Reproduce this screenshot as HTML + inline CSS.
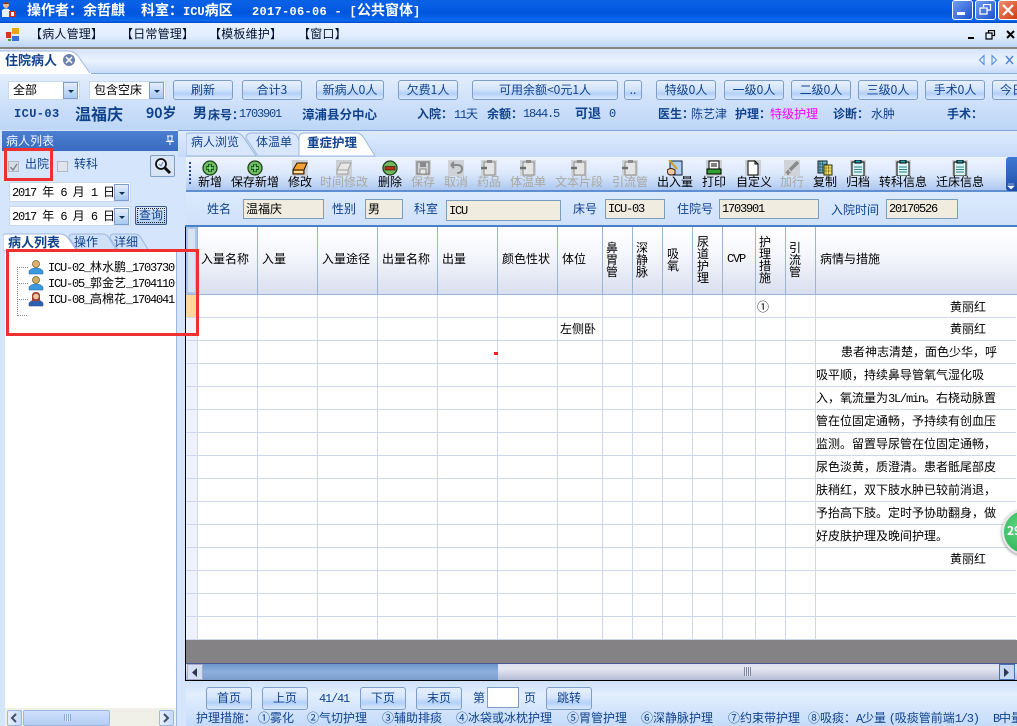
<!DOCTYPE html>
<html><head><meta charset="utf-8">
<style>
html,body{margin:0;padding:0;width:1017px;height:726px;overflow:hidden;background:#d6e6fa}
body{position:relative;font:12px/14px "WenQuanYi Zen Hei","Noto Sans CJK SC",sans-serif;color:#000}
div,span.a,svg{position:absolute}
.t{white-space:nowrap}
.l{font-family:"Liberation Mono",monospace;font-size:12px;letter-spacing:-1.2px}
.b{font-weight:bold}
.n{color:#10428c}
.btn{height:20px;top:80px;box-sizing:border-box;border:1px solid #7f9dc9;border-radius:3px;background:linear-gradient(#e6f0fd 0,#d5e5fb 45%,#b3d0f7 70%,#d9e8fc 100%);color:#10428c;text-align:center;line-height:17px;white-space:nowrap;overflow:hidden}
.inp{background:#f0ece0;border:1px solid #7b9ebd;box-sizing:border-box;white-space:nowrap;padding:2px 2px;line-height:14px}
.lab{color:#10428c;font-size:12px;white-space:nowrap;top:202px}
.tb{top:175px;white-space:nowrap;line-height:14px}
.g{color:#a8a8a0}
.ic{top:160px}
.v{top:227px;width:1px;height:412px;background:#cfd7ec}
.vh{top:227px;width:1px;height:67px;background:#9ab6d6}
.h{left:186px;width:830px;height:1px;background:#cfd7ec}
.th{top:252px;white-space:nowrap}
.tv{top:0;width:12px;line-height:12px;text-align:center}
.c{left:816px;white-space:nowrap;width:200px}
.leg{top:711px;white-space:nowrap;color:#10428c}
.dd{width:15px;height:17px;box-sizing:border-box;border:1px solid #7f9dc9;background:linear-gradient(#e4eefc,#a9c8f2)}
.dd:after{content:"";position:absolute;left:4px;top:7px;border:3px solid transparent;border-top:3px solid #10305c;border-bottom:0}
.in2{background:#fff;border:1px solid #c9d9ef;box-sizing:border-box}
</style></head><body>

<!-- Title bar -->
<div style="left:0;top:0;width:1017px;height:23px;background:linear-gradient(#0a5fe0 0,#0a62e8 10%,#0055dc 55%,#0a68ee 90%,#0048c8 100%)"></div>
<svg style="left:1px;top:1px" width="16" height="18" viewBox="0 0 16 18"><circle cx="5" cy="4" r="3" fill="#e8b890"/><path d="M2 3Q5-1 8 3z" fill="#803018"/><path d="M1 16V9q4-3 8 0v7z" fill="#e8f0f8"/><rect x="8" y="10" width="7" height="6" fill="#c83020"/><rect x="10" y="11" width="3" height="4" fill="#fff"/></svg>
<div class="t b" style="left:27px;top:2px;color:#fff;font-size:14px;line-height:16px">操作者：余哲麒</div>
<div class="t b" style="left:141px;top:2px;color:#fff;font-size:14px;line-height:16px">科室：<span style="font-family:'Liberation Mono',monospace;font-size:12px">ICU</span>病区</div>
<div class="t b" style="left:252px;top:2px;color:#fff;font-size:14px;line-height:16px"><span style="font-family:'Liberation Mono',monospace;font-size:12px;letter-spacing:.3px">2017-06-06 - [</span>公共窗体<span style="font-family:'Liberation Mono',monospace;font-size:12px">]</span></div>
<div style="left:952px;top:0;width:21px;height:20px;box-sizing:border-box;border:1px solid #fff;border-radius:3px;background:linear-gradient(135deg,#6f9cf0,#1c50d0)"></div>
<div style="left:957px;top:12px;width:8px;height:3px;background:#fff"></div>
<div style="left:975px;top:0;width:21px;height:20px;box-sizing:border-box;border:1px solid #fff;border-radius:3px;background:linear-gradient(135deg,#6f9cf0,#1c50d0)"></div>
<svg style="left:979px;top:4px" width="13" height="12"><path d="M4.500 3V.5H11.500V6H8M1 4H8V10H1Z" fill="none" stroke="#fff" stroke-width="1.300"/></svg>
<div style="left:998px;top:0;width:19px;height:20px;box-sizing:border-box;border:1px solid #fff;border-right:0;border-radius:3px 0 0 3px;background:linear-gradient(135deg,#f09070,#d03c10)"></div>
<svg style="left:1002px;top:4px" width="12" height="12"><path d="M1 1L11 11M11 1L1 11" stroke="#fff" stroke-width="2.200"/></svg>

<!-- Menu bar -->
<div style="left:0;top:23px;width:1017px;height:24px;background:linear-gradient(#e9f2fe,#e2edfd 55%,#bcd5f6)"></div>
<div style="left:0;top:47px;width:1017px;height:2px;background:#8a8780"></div>
<svg style="left:6px;top:28px" width="14" height="14"><rect x="0" y="4" width="5" height="6" fill="#e03020"/><rect x="6" y="0" width="7" height="6" fill="#f0a020"/><rect x="6" y="8" width="7" height="5" fill="#3870d8"/><rect x="2" y="11" width="3" height="2" fill="#40a040"/></svg>
<div class="t" style="left:30px;top:27px;font-size:12px;color:#001030;letter-spacing:.2px">【病人管理】</div>
<div class="t" style="left:121px;top:27px;color:#001030;letter-spacing:.2px">【日常管理】</div>
<div class="t" style="left:209px;top:27px;color:#001030;letter-spacing:.2px">【模板维护】</div>
<div class="t" style="left:298px;top:27px;color:#001030;letter-spacing:.2px">【窗口】</div>
<div style="left:968px;top:37px;width:6px;height:2px;background:#000"></div>
<svg style="left:985px;top:30px" width="11" height="10"><path d="M3.500 2.500V.5H9.500V5.500H7M1 3H7V9H1Z" fill="none" stroke="#000" stroke-width="1.200"/></svg>
<svg style="left:1006px;top:30px" width="10" height="10"><path d="M1 1L8 8M8 1L1 8" stroke="#000" stroke-width="2"/></svg>

<!-- Tab row -->
<div style="left:0;top:49px;width:1017px;height:24px;background:linear-gradient(#d7e5fb,#eaf2fe 50%,#c7dbf8)"></div>
<div style="left:0;top:73px;width:1017px;height:1px;background:#8fb0dc"></div>
<svg style="left:0;top:50px" width="92" height="24"><path d="M0 24V2Q0 1 2 1H68Q74 1 78 6L91 23V24Z" fill="#fff"/><path d="M0 1H68Q74 1 78 6L90 23" fill="none" stroke="#9db8de"/></svg>
<div class="t b" style="left:5px;top:53px;color:#10428c;font-size:13px">住院病人</div>
<div style="left:63px;top:54px;width:12px;height:12px;border-radius:6px;background:#6d82a8"></div>
<svg style="left:65px;top:56px" width="8" height="8"><path d="M1 1L7 7M7 1L1 7" stroke="#fff" stroke-width="1.500"/></svg>
<svg style="left:977px;top:54px" width="40" height="12"><path d="M7 1.500L2.500 6L7 10.500Z" fill="none" stroke="#4f88dc"/><path d="M15 1.500L19.500 6L15 10.500Z" fill="none" stroke="#4f88dc"/><path d="M29 2L36 10M36 2L29 10" stroke="#4f88dc" stroke-width="1.500"/></svg>

<!-- Top filter area -->
<div style="left:0;top:74px;width:1017px;height:56px;background:linear-gradient(#e3eefd,#cfe1fa 50%,#bdd6f7)"></div>
<div class="in2 t" style="left:8px;top:81px;width:72px;height:19px;padding:1px 4px">全部</div>
<div class="dd" style="left:63px;top:82px"></div>
<div class="in2 t" style="left:89px;top:81px;width:77px;height:19px;padding:1px 4px">包含空床</div>
<div class="dd" style="left:149px;top:82px"></div>
<div class="btn" style="left:173px;width:60px">刷新</div>
<div class="btn" style="left:242px;width:60px">合计3</div>
<div class="btn" style="left:316px;width:68px">新病人0人</div>
<div class="btn" style="left:398px;width:60px">欠费1人</div>
<div class="btn" style="left:472px;width:146px">可用余额&lt;0元1人</div>
<div class="btn" style="left:624px;width:18px">..</div>
<div class="btn" style="left:656px;width:60px">特级0人</div>
<div class="btn" style="left:724px;width:60px">一级0人</div>
<div class="btn" style="left:791px;width:60px">二级0人</div>
<div class="btn" style="left:858px;width:60px">三级0人</div>
<div class="btn" style="left:925px;width:60px">手术0人</div>
<div class="btn" style="left:992px;width:40px">今日</div>

<div class="t b n" style="left:14px;top:107px;font-family:'Liberation Mono',monospace;font-size:12px;letter-spacing:.4px">ICU-03</div>
<div class="t b n" style="left:75px;top:105px;font-size:16px;line-height:16px">温福庆</div>
<div class="t b n" style="left:146px;top:106px;font-size:14px">90岁</div>
<div class="t b n" style="left:193px;top:106px;font-size:14px">男</div>
<div class="t b n" style="left:208px;top:108px">床号：</div>
<div class="t n l" style="left:239px;top:107px">1703901</div>
<div class="t b n" style="left:302px;top:107px;font-size:12.500px">漳浦县分中心</div>
<div class="t b n" style="left:417px;top:107px">入院：</div>
<div class="t n" style="left:454px;top:107px"><span class="l">11</span>天</div>
<div class="t b n" style="left:487px;top:107px">余额：</div>
<div class="t n l" style="left:523px;top:107px">1844.5</div>
<div class="t b n" style="left:575px;top:106px;font-size:13px">可退</div>
<div class="t n l" style="left:609px;top:107px">0</div>
<div class="t b n" style="left:658px;top:107px">医生：</div>
<div class="t n" style="left:691px;top:107px">陈艺津</div>
<div class="t b n" style="left:735px;top:107px">护理：</div>
<div class="t" style="left:770px;top:107px;color:#ff00ff">特级护理</div>
<div class="t b n" style="left:833px;top:107px">诊断：</div>
<div class="t n" style="left:871px;top:107px">水肿</div>
<div class="t b n" style="left:947px;top:107px">手术：</div>

<!-- Left panel -->
<div style="left:0;top:130px;width:185px;height:596px;background:#d5e5fb"></div>
<div style="left:2px;top:131px;width:176px;height:20px;background:linear-gradient(#4b7fd0,#3a6bc0)"></div>
<div class="t" style="left:6px;top:134px;color:#f0f6ff">病人列表</div>
<svg style="left:165px;top:135px" width="10" height="11"><path d="M2 1H8M3 1V6H7V1M1 6.500H9M5 7V10" stroke="#fff" fill="none"/></svg>
<div style="left:8px;top:161px;width:11px;height:11px;box-sizing:border-box;border:1px solid #b0b8c8;background:#d8dce4"></div>
<svg style="left:9px;top:162px" width="10" height="10"><path d="M1.500 5L4 8L8 2" fill="none" stroke="#7a8090" stroke-width="1.300"/></svg>
<div class="t n" style="left:25px;top:157px">出院</div>
<div style="left:57px;top:161px;width:11px;height:11px;box-sizing:border-box;border:1px solid #b0b8c8;background:#e0e4ec"></div>
<div class="t n" style="left:74px;top:157px">转科</div>
<div style="left:150px;top:155px;width:25px;height:22px;box-sizing:border-box;border:1px solid #7f9dc9;border-radius:2px;background:#d8e4f4"></div>
<svg style="left:153px;top:157px" width="19" height="18"><circle cx="8" cy="7" r="5" fill="#e8f0ff" stroke="#101010" stroke-width="1.800"/><path d="M12 11L17 16" stroke="#101010" stroke-width="3"/><path d="M6 7L8 9L10 5" stroke="#6080c0" fill="none"/></svg>
<div class="in2 t" style="left:9px;top:182px;width:122px;height:20px;padding:2px 2px;word-spacing:3.500px"><span class="l">2017</span> 年 <span class="l">6</span> 月 <span class="l">1</span> 日</div>
<div class="dd" style="left:114px;top:184px"></div>
<div class="in2 t" style="left:9px;top:206px;width:122px;height:20px;padding:2px 2px;word-spacing:3.500px"><span class="l">2017</span> 年 <span class="l">6</span> 月 <span class="l">6</span> 日</div>
<div class="dd" style="left:114px;top:208px"></div>
<div class="t n" style="left:135px;top:206px;width:32px;height:19px;box-sizing:border-box;border:1px solid #3a5a90;outline:1px dotted #222;outline-offset:-3px;border-radius:2px;background:linear-gradient(#dfeafc,#aecbf3);text-align:center;line-height:16px">查询</div>
<!-- left tabs -->
<svg style="left:3px;top:233px" width="160" height="18"><path d="M0 18V3Q0 1 3 1H57Q62 1 65 5L74 18Z" fill="#fff" stroke="#9db8de"/><path d="M66 5Q66 1 70 1H100Q104 1 106 5L114 18H76Z" fill="#cfe0f9" stroke="#9db8de"/><path d="M107 5Q107 1 111 1H132Q136 1 138 5L146 18H116Z" fill="#cfe0f9" stroke="#9db8de"/></svg>
<div class="t b n" style="left:8px;top:235px;font-size:13px">病人列表</div>
<div class="t n" style="left:74px;top:235px">操作</div>
<div class="t n" style="left:114px;top:235px">详细</div>
<!-- Tree -->
<div style="left:5px;top:251px;width:172px;height:457px;background:#fff;border:0"></div>
<div style="left:5px;top:250px;width:172px;height:1px;background:#9db8de"></div>
<div style="left:176px;top:250px;width:1px;height:476px;background:#9db8de"></div>
<div style="left:17px;top:267px;width:0;height:49px;border-left:1px dotted #888"></div>
<div style="left:17px;top:267px;width:11px;height:0;border-top:1px dotted #888"></div>
<div style="left:17px;top:283px;width:11px;height:0;border-top:1px dotted #888"></div>
<div style="left:17px;top:299px;width:11px;height:0;border-top:1px dotted #888"></div>
<div style="left:17px;top:315px;width:10px;height:0;border-top:1px dotted #888"></div>
<svg style="left:28px;top:259px" width="16" height="16"><path d="M1 15V12Q3 9 8 9Q13 9 15 12V15Z" fill="#3a9ae0" stroke="#2060a0" stroke-width=".5"/><circle cx="8" cy="5" r="3.500" fill="#e0b070" stroke="#806030" stroke-width=".8"/></svg>
<svg style="left:28px;top:275px" width="16" height="16"><path d="M1 15V12Q3 9 8 9Q13 9 15 12V15Z" fill="#3a9ae0" stroke="#2060a0" stroke-width=".5"/><circle cx="8" cy="5" r="3.500" fill="#d0b060" stroke="#706030" stroke-width=".8"/></svg>
<svg style="left:28px;top:291px" width="16" height="16"><path d="M1 15V12Q3 9 8 9Q13 9 15 12V15Z" fill="#3060b0" stroke="#204080" stroke-width=".5"/><path d="M4 10V5Q4 1 8 1Q12 1 12 5V10Z" fill="#a04030"/><circle cx="8" cy="5.500" r="2.800" fill="#f0c8a0"/></svg>
<div class="t" style="left:48px;top:260px"><span class="l">ICU-02_</span>林水鹏<span class="l">_1703730</span></div>
<div class="t" style="left:48px;top:276px"><span class="l">ICU-05_</span>郭金艺<span class="l">_1704110</span></div>
<div class="t" style="left:48px;top:292px"><span class="l">ICU-08_</span>高棉花<span class="l">_1704041</span></div>
<!-- left scrollbar -->
<div style="left:5px;top:708px;width:171px;height:18px;background:#f0efe8"></div>
<div style="left:7px;top:710px;width:15px;height:16px;box-sizing:border-box;border:1px solid #9db8de;border-radius:2px;background:linear-gradient(90deg,#e8f0fc,#c6d9f6)"></div>
<svg style="left:9px;top:713px" width="10" height="10"><path d="M7 1L3 5L7 9" fill="none" stroke="#405070" stroke-width="2"/></svg>
<div style="left:23px;top:710px;width:87px;height:16px;box-sizing:border-box;border:1px solid #9db8de;border-radius:2px;background:linear-gradient(#cfe0fa,#b4ccf4)"></div>
<div style="left:64px;top:714px;width:7px;height:7px;background:repeating-linear-gradient(90deg,#8fa8d0 0 1px,#e0eafa 1px 2px)"></div>
<div style="left:159px;top:710px;width:15px;height:16px;box-sizing:border-box;border:1px solid #9db8de;border-radius:2px;background:linear-gradient(90deg,#e8f0fc,#c6d9f6)"></div>
<svg style="left:161px;top:713px" width="10" height="10"><path d="M3 1L7 5L3 9" fill="none" stroke="#405070" stroke-width="2"/></svg>

<!-- Right tabs -->
<div style="left:178px;top:130px;width:839px;height:27px;background:linear-gradient(#e0ecfd,#c6dafa)"></div>
<div style="left:178px;top:130px;width:839px;height:1px;background:#7fa3d8"></div>
<svg style="left:186px;top:132px" width="190" height="25"><path d="M0 24V3Q0 1 3 1H50Q55 1 58 6L70 24Z" fill="#d8e6fb" stroke="#9db8de"/><path d="M60 6Q60 1 66 1H105Q110 1 112 6L120 24H72Z" fill="#d8e6fb" stroke="#9db8de"/><path d="M113 24V6Q113 1 118 1H170Q175 1 178 6L189 24Z" fill="#fff" stroke="#9db8de"/></svg>
<div class="t n" style="left:191px;top:135px">病人浏览</div>
<div class="t n" style="left:256px;top:135px">体温单</div>
<div class="t b n" style="left:307px;top:135px;font-size:12.500px">重症护理</div>

<!-- Toolbar -->
<div style="left:186px;top:157px;width:831px;height:34px;background:linear-gradient(#eef4fe,#dbe8fc 50%,#aac6f0)"></div>
<div style="left:186px;top:190px;width:831px;height:2px;background:#5f8fd0"></div>
<div style="left:189px;top:162px;width:2px;height:24px;background:repeating-linear-gradient(#23468c 0 2px,transparent 2px 4px)"></div>
<div style="left:1006px;top:157px;width:11px;height:34px;background:linear-gradient(#3f78d4,#1e4fa8);border-radius:3px 0 0 3px"></div>
<svg style="left:1007px;top:183px" width="9" height="7"><path d="M1 1H7M1 3H7L4 6Z" fill="#fff" stroke="#fff" stroke-width=".6"/></svg>

<svg class="ic" style="left:202px" width="16" height="16"><circle cx="8" cy="8" r="7" fill="#6cc060" stroke="#224020" stroke-width="1.300"/><path d="M8 4V12M4 8H12" stroke="#103010" stroke-width="3.500"/><path d="M8 4.500V11.500M4.500 8H11.500" stroke="#80f080" stroke-width="1.500"/></svg>
<svg class="ic" style="left:247px" width="16" height="16"><circle cx="8" cy="8" r="7" fill="#6cc060" stroke="#224020" stroke-width="1.300"/><path d="M8 4V12M4 8H12" stroke="#103010" stroke-width="3.500"/><path d="M8 4.500V11.500M4.500 8H11.500" stroke="#80f080" stroke-width="1.500"/></svg>
<svg class="ic" style="left:292px" width="16" height="16"><rect width="16" height="16" fill="#ccd0d4"/><path d="M1 10L5 3H15L12 10V14H1Z" fill="#f4a030" stroke="#201000"/><path d="M1 10H12" stroke="#201000"/><rect x="2" y="11" width="9" height="2" fill="#fce0a0"/></svg>
<svg class="ic" style="left:336px" width="16" height="16"><rect width="16" height="16" fill="#ccd0d4"/><path d="M1 10L5 3H15L12 10V14H1Z" fill="#e8e8e8" stroke="#a0a0a0"/><path d="M1 10H12" stroke="#a0a0a0"/></svg>
<svg class="ic" style="left:382px" width="16" height="16"><circle cx="8" cy="8" r="7" fill="#70b860" stroke="#224020" stroke-width="1.300"/><rect x="3" y="6.500" width="10" height="3.500" fill="#c03010" stroke="#201000" stroke-width=".6"/></svg>
<svg class="ic" style="left:415px" width="16" height="16"><rect width="16" height="16" fill="#cfd2d6"/><path d="M2 2H14V14H2Z" fill="none" stroke="#8a8a8a" stroke-width="1.500"/><rect x="5" y="2" width="6" height="5" fill="#8a8a8a"/><rect x="5" y="9" width="6" height="5" fill="#e8e8e8" stroke="#8a8a8a"/></svg>
<svg class="ic" style="left:448px" width="16" height="16"><rect width="16" height="16" fill="#cfd2d6"/><path d="M3 5H10Q14 5 14 9T9 13M3 5L6 2M3 5L6 8" fill="none" stroke="#8a8a8a" stroke-width="2"/></svg>
<svg class="ic" style="left:481px" width="16" height="16"><rect width="16" height="16" fill="#cfd2d6"/><rect x="3" y="2" width="11" height="13" fill="#e4e4e4" stroke="#8a8a8a"/><rect x="6" y="0" width="5" height="3" fill="#8a8a8a"/><path d="M0 8H6" stroke="#707070" stroke-width="2.500"/></svg>
<svg class="ic" style="left:520px" width="16" height="16"><rect width="16" height="16" fill="#cfd2d6"/><rect x="3" y="2" width="11" height="13" fill="#e4e4e4" stroke="#8a8a8a"/><rect x="6" y="0" width="5" height="3" fill="#8a8a8a"/><path d="M0 8H6" stroke="#707070" stroke-width="2.500"/></svg>
<svg class="ic" style="left:571px" width="16" height="16"><rect width="16" height="16" fill="#cfd2d6"/><rect x="3" y="2" width="11" height="13" fill="#e4e4e4" stroke="#8a8a8a"/><rect x="6" y="0" width="5" height="3" fill="#8a8a8a"/><path d="M0 8H6" stroke="#707070" stroke-width="2.500"/></svg>
<svg class="ic" style="left:622px" width="16" height="16"><rect width="16" height="16" fill="#cfd2d6"/><rect x="3" y="2" width="11" height="13" fill="#e4e4e4" stroke="#8a8a8a"/><rect x="6" y="0" width="5" height="3" fill="#8a8a8a"/><path d="M0 8H6" stroke="#707070" stroke-width="2.500"/></svg>
<svg class="ic" style="left:667px" width="16" height="16"><rect x="3" y="1" width="12" height="14" fill="#b0d0f0" stroke="#102040"/><path d="M2 0L10 9" stroke="#d0a020" stroke-width="2"/><path d="M0 10Q4 7 8 10V14Q4 16 1 14Z" fill="#f0c8a0" stroke="#402010"/></svg>
<svg class="ic" style="left:706px" width="16" height="16"><rect width="16" height="16" fill="#ccd0d4"/><rect x="3" y="1" width="10" height="8" fill="#fff" stroke="#000"/><path d="M5 4H11M5 6H11" stroke="#000"/><rect x="1" y="9" width="14" height="5" fill="#30a030" stroke="#000"/></svg>
<svg class="ic" style="left:745px" width="16" height="16"><rect width="16" height="16" fill="#ccd0d4"/><path d="M3 1H10L13 4V15H3Z" fill="#fff" stroke="#000"/><path d="M10 1V4H13" fill="none" stroke="#000"/></svg>
<svg class="ic" style="left:784px" width="16" height="16"><rect width="16" height="16" fill="#cfd2d6"/><path d="M14 2L6 10" stroke="#8a8a8a" stroke-width="3.500"/><path d="M4 10V15M1.500 12.500H6.500" stroke="#8a8a8a" stroke-width="2"/></svg>
<svg class="ic" style="left:817px" width="16" height="16"><rect x="1" y="1" width="9" height="12" fill="#70c0d0" stroke="#102030"/><path d="M3 1V13M5.500 1V13M1 4H10M1 7H10M1 10H10" stroke="#102030" stroke-width=".5"/><rect x="7" y="5" width="8" height="10" fill="#f0e060" stroke="#303010"/><path d="M9 5V15M11.500 5V15M7 8H15M7 11H15" stroke="#605010" stroke-width=".5"/></svg>
<svg class="ic" style="left:850px" width="16" height="16"><rect width="16" height="16" fill="#ccd0d4"/><rect x="2" y="2" width="12" height="14" fill="#d8f4f4" stroke="#000"/><rect x="5" y="0" width="6" height="3" fill="#20a0b0" stroke="#000"/><path d="M4 7H12M4 9.500H12M4 12H12" stroke="#308080"/></svg>
<svg class="ic" style="left:895px" width="16" height="16"><rect width="16" height="16" fill="#ccd0d4"/><rect x="2" y="2" width="12" height="14" fill="#d8f4f4" stroke="#000"/><rect x="5" y="0" width="6" height="3" fill="#20a0b0" stroke="#000"/><path d="M4 7H12M4 9.500H12M4 12H12" stroke="#308080"/></svg>
<svg class="ic" style="left:952px" width="16" height="16"><rect width="16" height="16" fill="#ccd0d4"/><rect x="2" y="2" width="12" height="14" fill="#d8f4f4" stroke="#000"/><rect x="5" y="0" width="6" height="3" fill="#20a0b0" stroke="#000"/><path d="M4 7H12M4 9.500H12M4 12H12" stroke="#308080"/></svg>

<div class="tb" style="left:198px">新增</div>
<div class="tb" style="left:231px">保存新增</div>
<div class="tb" style="left:288px">修改</div>
<div class="tb g" style="left:320px">时间修改</div>
<div class="tb" style="left:378px">删除</div>
<div class="tb g" style="left:411px">保存</div>
<div class="tb g" style="left:444px">取消</div>
<div class="tb g" style="left:477px">药品</div>
<div class="tb g" style="left:510px">体温单</div>
<div class="tb g" style="left:555px">文本片段</div>
<div class="tb g" style="left:612px">引流管</div>
<div class="tb" style="left:657px">出入量</div>
<div class="tb" style="left:702px">打印</div>
<div class="tb" style="left:736px">自定义</div>
<div class="tb g" style="left:780px">加行</div>
<div class="tb" style="left:813px">复制</div>
<div class="tb" style="left:846px">归档</div>
<div class="tb" style="left:879px">转科信息</div>
<div class="tb" style="left:936px">迁床信息</div>

<!-- Form row -->
<div style="left:186px;top:192px;width:831px;height:33px;background:linear-gradient(#dceafc,#cfe1fa)"></div>
<div style="left:185px;top:225px;width:832px;height:2px;background:#4a80c4"></div>
<div class="lab" style="left:207px">姓名</div>
<div class="inp" style="left:243px;top:199px;width:81px;height:20px">温福庆</div>
<div class="lab" style="left:332px">性别</div>
<div class="inp" style="left:365px;top:199px;width:38px;height:20px">男</div>
<div class="lab" style="left:414px">科室</div>
<div class="inp l" style="left:446px;top:200px;width:115px;height:21px;padding-top:3px">ICU</div>
<div class="lab" style="left:573px">床号</div>
<div class="inp l" style="left:605px;top:199px;width:60px;height:20px;padding-top:2px">ICU-03</div>
<div class="lab" style="left:677px">住院号</div>
<div class="inp l" style="left:719px;top:199px;width:100px;height:20px;padding-top:2px">1703901</div>
<div class="lab" style="left:831px;top:203px">入院时间</div>
<div class="inp l" style="left:886px;top:199px;width:72px;height:20px;padding-top:2px">20170526</div>

<!-- Grid -->
<div style="left:185px;top:227px;width:1px;height:454px;background:#000"></div>
<div style="left:186px;top:227px;width:831px;height:413px;background:#fff"></div>
<div style="left:186px;top:227px;width:831px;height:67px;background:linear-gradient(#fff 0,#f6f7fc 40%,#d9dfef 100%)"></div>
<div style="left:186px;top:294px;width:831px;height:1px;background:#9ab6d6"></div>
<div style="left:186px;top:227px;width:11px;height:67px;box-sizing:border-box;border:2px solid #aac6ee;background:#d8e2f2"></div>
<div style="left:186px;top:295px;width:11px;height:22px;background:#ffd79b"></div>
<div style="left:186px;top:317px;width:11px;height:1px;background:#f0a040"></div>
<div style="left:186px;top:318px;width:11px;height:322px;background:#eef2fc"></div>

<div class="vh" style="left:197px"></div><div class="vh" style="left:257px"></div><div class="vh" style="left:317px"></div><div class="vh" style="left:377px"></div><div class="vh" style="left:437px"></div><div class="vh" style="left:497px"></div><div class="vh" style="left:557px"></div><div class="vh" style="left:602px"></div><div class="vh" style="left:632px"></div><div class="vh" style="left:662px"></div><div class="vh" style="left:692px"></div><div class="vh" style="left:722px"></div><div class="vh" style="left:755px"></div><div class="vh" style="left:785px"></div><div class="vh" style="left:815px"></div>
<div class="v" style="left:197px;top:295px;height:345px"></div><div class="v" style="left:257px;top:295px;height:345px"></div><div class="v" style="left:317px;top:295px;height:345px"></div><div class="v" style="left:377px;top:295px;height:345px"></div><div class="v" style="left:437px;top:295px;height:345px"></div><div class="v" style="left:497px;top:295px;height:345px"></div><div class="v" style="left:557px;top:295px;height:345px"></div><div class="v" style="left:602px;top:295px;height:345px"></div><div class="v" style="left:632px;top:295px;height:345px"></div><div class="v" style="left:662px;top:295px;height:345px"></div><div class="v" style="left:692px;top:295px;height:345px"></div><div class="v" style="left:722px;top:295px;height:345px"></div><div class="v" style="left:755px;top:295px;height:345px"></div><div class="v" style="left:785px;top:295px;height:345px"></div><div class="v" style="left:815px;top:295px;height:345px"></div>

<div class="h" style="top:317px"></div><div class="h" style="top:340px"></div><div class="h" style="top:363px"></div><div class="h" style="top:386px"></div><div class="h" style="top:409px"></div><div class="h" style="top:432px"></div><div class="h" style="top:455px"></div><div class="h" style="top:478px"></div><div class="h" style="top:501px"></div><div class="h" style="top:524px"></div><div class="h" style="top:547px"></div><div class="h" style="top:570px"></div><div class="h" style="top:593px"></div><div class="h" style="top:616px"></div><div class="h" style="top:639px"></div>

<div class="th" style="left:201px">入量名称</div>
<div class="th" style="left:262px">入量</div>
<div class="th" style="left:322px">入量途径</div>
<div class="th" style="left:382px">出量名称</div>
<div class="th" style="left:442px">出量</div>
<div class="th" style="left:502px">颜色性状</div>
<div class="th" style="left:562px">体位</div>
<div class="tv" style="left:606px;top:242px">鼻<br>胃<br>管</div>
<div class="tv" style="left:636px;top:242px">深<br>静<br>脉</div>
<div class="tv" style="left:667px;top:248px">吸<br>氧</div>
<div class="tv" style="left:697px;top:236px">尿<br>道<br>护<br>理</div>
<div class="th l" style="left:727px">CVP</div>
<div class="tv" style="left:759px;top:236px">护<br>理<br>措<br>施</div>
<div class="tv" style="left:789px;top:242px">引<br>流<br>管</div>
<div class="th" style="left:820px">病情与措施</div>

<div class="t" style="left:757px;top:300px">①</div>
<div class="t" style="left:950px;top:300px">黄丽红</div>
<div class="t" style="left:950px;top:322px">黄丽红</div>
<div class="t" style="left:560px;top:322px">左侧卧</div>
<div class="c" style="top:345px;left:841px">患者神志清楚，面色少华，呼</div>
<div class="c" style="top:368px">吸平顺，持续鼻导管氧气湿化吸</div>
<div class="c" style="top:391px">入，氧流量为<span class="l">3L/min</span>。右桡动脉置</div>
<div class="c" style="top:414px">管在位固定通畅，予持续有创血压</div>
<div class="c" style="top:437px">监测。留置导尿管在位固定通畅，</div>
<div class="c" style="top:460px">尿色淡黄，质澄清。患者骶尾部皮</div>
<div class="c" style="top:483px">肤稍红，双下肢水肿已较前消退，</div>
<div class="c" style="top:506px">予抬高下肢。定时予协助翻身，做</div>
<div class="c" style="top:529px">好皮肤护理及晚间护理。</div>
<div class="t" style="left:950px;top:552px">黄丽红</div>
<div style="left:494px;top:352px;width:4px;height:3px;background:#ff2020"></div>

<!-- Green circle -->
<div style="left:1002px;top:509px;width:46px;height:46px;border-radius:23px;background:radial-gradient(circle at 40% 40%,#60d880,#20a850);border:2px solid #e8e8e8;box-sizing:border-box;box-shadow:0 1px 3px #888"></div>
<div class="t b" style="left:1007px;top:524px;color:#fff">29</div>

<!-- Grey + scrollbar -->
<div style="left:186px;top:640px;width:831px;height:23px;background:#858285"></div>
<div style="left:186px;top:663px;width:831px;height:17px;background:linear-gradient(#d8dcec,#e8e8f4 30%,#b4bdd6)"></div>
<div style="left:186px;top:663px;width:831px;height:1px;background:#4a5a90"></div>
<div style="left:203px;top:664px;width:295px;height:16px;background:linear-gradient(#6f97cb,#8db0de 50%,#7a9cca)"></div>
<div style="left:187px;top:664px;width:16px;height:16px;box-sizing:border-box;border:1px solid #aac;background:#d4dff2"></div>
<svg style="left:190px;top:667px" width="10" height="11"><path d="M7 1V10L2 5.500Z" fill="#303850"/></svg>
<div style="left:999px;top:664px;width:16px;height:16px;box-sizing:border-box;border:1px solid #4a70b8;background:#c4d6f2"></div>
<svg style="left:1002px;top:667px" width="10" height="11"><path d="M2 1V10L7 5.500Z" fill="#303850"/></svg>
<div style="left:744px;top:667px;width:7px;height:9px;background:repeating-linear-gradient(90deg,#8088a0 0 1px,#e0e4f0 1px 2px)"></div>
<div style="left:186px;top:680px;width:831px;height:1px;background:#000"></div>
<div style="left:186px;top:681px;width:831px;height:45px;background:linear-gradient(#cfe2fa,#e2eefd 30%,#c4dbf9)"></div>

<!-- Bottom -->
<div class="btn" style="left:206px;top:687px;width:46px;height:23px;line-height:19px">首页</div>
<div class="btn" style="left:262px;top:687px;width:46px;height:23px;line-height:19px">上页</div>
<div class="t n l" style="left:319px;top:692px">41/41</div>
<div class="btn" style="left:360px;top:687px;width:46px;height:23px;line-height:19px">下页</div>
<div class="btn" style="left:416px;top:687px;width:46px;height:23px;line-height:19px">末页</div>
<div class="t n" style="left:473px;top:691px">第</div>
<div style="left:487px;top:687px;width:32px;height:21px;background:#fff;border:1px solid #7f9dc9;box-sizing:border-box"></div>
<div class="t n" style="left:524px;top:691px">页</div>
<div class="btn" style="left:546px;top:687px;width:46px;height:23px;line-height:19px">跳转</div>

<div class="leg" style="left:196px">护理措施：</div>
<div class="leg" style="left:258px">①雾化</div>
<div class="leg" style="left:307px">②气切护理</div>
<div class="leg" style="left:382px">③辅助排痰</div>
<div class="leg" style="left:456px">④冰袋或冰枕护理</div>
<div class="leg" style="left:567px">⑤胃管护理</div>
<div class="leg" style="left:641px">⑥深静脉护理</div>
<div class="leg" style="left:728px">⑦约束带护理</div>
<div class="leg" style="left:808px">⑧吸痰：<span class="l">A</span>少量 <span class="l">(</span>吸痰管前端<span class="l">1/3)</span></div>
<div class="leg" style="left:993px"><span class="l">B</span>中量</div>

<!-- Red annotations -->
<div style="left:4px;top:148px;width:49px;height:33px;box-sizing:border-box;border:3px solid #f03030"></div>
<div style="left:6px;top:249px;width:193px;height:87px;box-sizing:border-box;border:3px solid #f03030"></div>
</body></html>
